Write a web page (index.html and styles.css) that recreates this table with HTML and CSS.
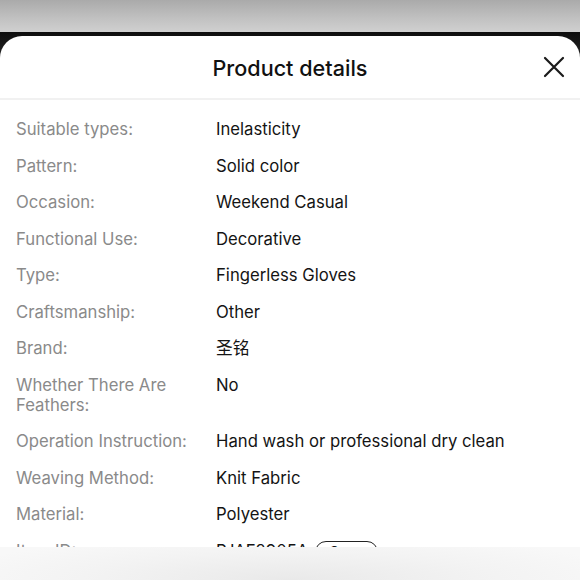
FILE: index.html
```html
<!DOCTYPE html>
<html>
<head>
<meta charset="utf-8">
<link rel="stylesheet" href="styles.css">
</head>
<body>
<div class="screen">
  <div class="topbar"></div>
  <div class="backdrop">
    <div class="sheet">
      <div class="header">
        <h1 class="title">Product details</h1>
        <button class="close" aria-label="Close">
          <svg width="22" height="22" viewBox="0 0 22 22"><path d="M2 2 L20 20 M20 2 L2 20" stroke="#1a1a1a" stroke-width="2.2" stroke-linecap="round" fill="none"/></svg>
        </button>
      </div>
      <dl class="specs">
        <div class="row"><dt>Suitable types:</dt><dd>Inelasticity</dd></div>
        <div class="row"><dt>Pattern:</dt><dd>Solid color</dd></div>
        <div class="row"><dt>Occasion:</dt><dd>Weekend Casual</dd></div>
        <div class="row"><dt>Functional Use:</dt><dd>Decorative</dd></div>
        <div class="row"><dt>Type:</dt><dd>Fingerless Gloves</dd></div>
        <div class="row"><dt>Craftsmanship:</dt><dd>Other</dd></div>
        <div class="row"><dt>Brand:</dt><dd>圣铭</dd></div>
        <div class="row"><dt class="narrow">Whether There Are Feathers:</dt><dd>No</dd></div>
        <div class="row"><dt>Operation Instruction:</dt><dd>Hand wash or professional dry clean</dd></div>
        <div class="row"><dt>Weaving Method:</dt><dd>Knit Fabric</dd></div>
        <div class="row"><dt>Material:</dt><dd>Polyester</dd></div>
        <div class="row"><dt>Item ID:</dt><dd>PJAF2905A <span class="copy">Copy</span></dd></div>
      </dl>
    </div>
  </div>
  <div class="bottombar"></div>
</div>
</body>
</html>
```
FILE: styles.css
```css
html, body {
  margin: 0;
  padding: 0;
  background: #fff;
}
.screen {
  position: relative;
  width: 580px;
  height: 580px;
  overflow: hidden;
  font-family: Inter, "Noto Sans CJK SC", sans-serif;
}
.topbar {
  height: 32px;
  background: linear-gradient(to bottom, #aaaaaa 0%, #c2c2c2 60%, #d0d0d0 100%);
}
.backdrop {
  background: linear-gradient(to bottom, #0d0d0d 0px, #2a2a2a 30px, #3a3a3a 60px);
  padding-top: 4px;
  height: 544px;
}
.sheet {
  background: #fff;
  border-radius: 22px 22px 0 0;
  height: 100%;
}
.header {
  height: 62px;
  display: flex;
  align-items: center;
  justify-content: center;
  position: relative;
  border-bottom: 2px solid #f1f1f1;
}
.title {
  margin: 0;
  font-size: 21.6px;
  font-weight: 500;
  color: #111;
  padding-top: 2px;
}
.close {
  position: absolute;
  right: 15px;
  top: 20px;
  border: none;
  background: none;
  padding: 0;
  width: 22px;
  height: 22px;
}
.close svg { display: block; }
.specs {
  margin: 0;
  padding: 19px 16px 0 16px;
  display: flex;
  flex-direction: column;
  gap: 16.5px;
}
.row {
  display: grid;
  grid-template-columns: 200px 1fr;
  font-size: 16.7px;
  line-height: 20px;
}
.row dt {
  color: #8a8a8a;
  padding-right: 6px;
}
.row dt.narrow {
  padding-right: 30px;
}
.row dd {
  margin: 0;
  color: #141414;
}
.copy {
  display: inline-block;
  border: 1px solid #222;
  border-radius: 12px;
  padding: 0 13px;
  font-size: 14px;
  line-height: 20px;
  margin-left: 2px;
}
.bottombar {
  position: absolute;
  left: 0;
  right: 0;
  bottom: 0;
  height: 33px;
  background: radial-gradient(ellipse 60% 140% at 50% 100%, #e9e9e9 0%, #f3f3f3 60%, #f8f8f8 100%);
}
```
